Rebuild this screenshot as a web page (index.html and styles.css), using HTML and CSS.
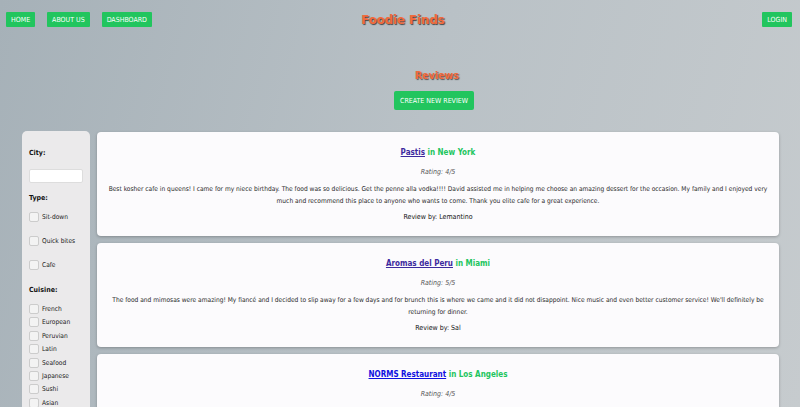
FILE: index.html
```html
<!DOCTYPE html>
<html>
<head>
<meta charset="utf-8">
<link rel="stylesheet" href="styles.css">
</head>
<body>
<header class="top">
  <nav class="nav">
    <a class="btn" href="#">HOME</a>
    <a class="btn" href="#">ABOUT US</a>
    <a class="btn" href="#">DASHBOARD</a>
  </nav>
  <h1 class="brand">Foodie Finds</h1>
  <div class="right"><a class="btn" href="#">LOGIN</a></div>
</header>
<section class="hero">
  <h2 class="page-title">Reviews</h2>
  <a class="btn btn-big" href="#">CREATE NEW REVIEW</a>
</section>
<main class="layout">
  <aside class="filters">
    <div class="label">City:</div>
    <input class="city" type="text">
    <div class="label">Type:</div>
    <div class="types">
      <label class="check"><span class="box"></span>Sit-down</label>
      <label class="check"><span class="box"></span>Quick bites</label>
      <label class="check"><span class="box"></span>Cafe</label>
    </div>
    <div class="label">Cuisine:</div>
    <div class="cuisines">
      <label class="check"><span class="box"></span>French</label>
      <label class="check"><span class="box"></span>European</label>
      <label class="check"><span class="box"></span>Peruvian</label>
      <label class="check"><span class="box"></span>Latin</label>
      <label class="check"><span class="box"></span>Seafood</label>
      <label class="check"><span class="box"></span>Japanese</label>
      <label class="check"><span class="box"></span>Sushi</label>
      <label class="check"><span class="box"></span>Asian</label>
    </div>
  </aside>
  <section class="reviews">
    <article class="card">
      <h3 class="card-title"><a class="visited" href="#">Pastis</a> <span class="city-name">in New York</span></h3>
      <p class="rating">Rating: 4/5</p>
      <p class="body">Best kosher cafe in queens! I came for my niece birthday. The food was so delicious. Get the penne alla vodka!!!! David assisted me in helping me choose an amazing dessert for the occasion. My family and I enjoyed very much and recommend this place to anyone who wants to come. Thank you elite cafe for a great experience.</p>
      <p class="by">Review by: Lemantino</p>
    </article>
    <article class="card">
      <h3 class="card-title"><a class="visited" href="#">Aromas del Peru</a> <span class="city-name">in Miami</span></h3>
      <p class="rating">Rating: 5/5</p>
      <p class="body">The food and mimosas were amazing! My fiancé and I decided to slip away for a few days and for brunch this is where we came and it did not disappoint. Nice music and even better customer service! We'll definitely be returning for dinner.</p>
      <p class="by">Review by: Sal</p>
    </article>
    <article class="card">
      <h3 class="card-title"><a class="link" href="#">NORMS Restaurant</a> <span class="city-name">in Los Angeles</span></h3>
      <p class="rating">Rating: 4/5</p>
    </article>
  </section>
</main>
</body>
</html>
```
FILE: styles.css
```css
html, body {
  margin: 0;
  padding: 0;
}
body {
  font-family: "DejaVu Sans Condensed", "DejaVu Sans", sans-serif;
  font-size: 6.6px;
  color: #2a2a2a;
  background: linear-gradient(105deg, #a6b1b8 0%, #b9c1c6 50%, #c6cbce 100%);
  height: 407px;
  overflow: hidden;
}
.top {
  display: grid;
  grid-template-columns: 1fr auto 1fr;
  align-items: center;
  padding: 12px 8px 0 6px;
  height: 15px;
}
.nav {
  display: flex;
  gap: 12px;
}
.right {
  display: flex;
  justify-content: flex-end;
}
.btn {
  display: inline-flex;
  align-items: center;
  justify-content: center;
  height: 15px;
  padding: 0 5px;
  background: #22c55e;
  color: #fff;
  text-decoration: none;
  font-size: 7px;
  border-radius: 1px;
  box-sizing: border-box;
}
.brand {
  margin: 0 0 0 8px;
  font-family: "DejaVu Sans Condensed", "DejaVu Sans", sans-serif;
  font-size: 13px;
  font-weight: bold;
  color: #f26a3c;
  text-shadow: 1px 1px 1px #444;
  line-height: 15px;
}
.hero {
  display: flex;
  flex-direction: column;
  align-items: center;
  padding: 41px 21px 0 89px;
}
.page-title {
  margin: 0 0 0 6px;
  font-family: "DejaVu Sans Condensed", "DejaVu Sans", sans-serif;
  font-size: 10.5px;
  font-weight: bold;
  color: #f26a3c;
  text-shadow: 1px 1px 1px #555;
  line-height: 14px;
}
.btn-big {
  margin-top: 9px;
  height: 19px;
  padding: 0 6px;
  border-radius: 2px;
}
.layout {
  display: flex;
  gap: 7px;
  padding: 21px 21px 0 22px;
  align-items: flex-start;
}
.filters {
  width: 68px;
  flex: none;
  box-sizing: border-box;
  background: #ebeaeb;
  border-radius: 5px;
  padding: 17px 7px 20px 7px;
  min-height: 300px;
}
.label {
  font-weight: bold;
  font-size: 7px;
  color: #111;
  line-height: 10px;
}
.city {
  display: block;
  width: 54px;
  height: 14px;
  box-sizing: border-box;
  border: 1px solid #ddd;
  border-radius: 2px;
  background: #fff;
  margin: 11px 0 10px;
  padding: 0;
}
.types {
  display: flex;
  flex-direction: column;
  gap: 14px;
  margin: 9px 0 15px;
}
.cuisines {
  display: flex;
  flex-direction: column;
  gap: 3.4px;
  margin-top: 9px;
}
.check {
  display: flex;
  align-items: center;
  gap: 3px;
  line-height: 10px;
  color: #222;
}
.box {
  width: 8px;
  height: 8px;
  border: 1px solid #ccc;
  border-radius: 2px;
  background: #f3f3f3;
  flex: none;
}
.reviews {
  flex: 1;
  display: flex;
  flex-direction: column;
  gap: 7px;
  padding-top: 1px;
}
.card {
  background: #fcfbfd;
  border-radius: 4px;
  box-shadow: 0 1px 3px rgba(0,0,0,0.25);
  padding: 15px 10px 0;
  height: 104px;
  box-sizing: border-box;
  text-align: center;
}
.card-title {
  margin: 0;
  font-family: "DejaVu Sans Condensed", "DejaVu Sans", sans-serif;
  font-size: 8px;
  font-weight: bold;
  line-height: 12px;
}
.visited {
  color: #3c2a9e;
}
.link {
  color: #1010e0;
}
.city-name {
  color: #22c55e;
}
.rating {
  margin: 8px 0 0;
  font-style: italic;
  font-size: 7px;
  color: #555;
  line-height: 10px;
}
.body {
  margin: 6px 0 0;
  line-height: 12px;
}
.by {
  margin: 5px 0 0;
  font-size: 7px;
  color: #111;
  line-height: 10px;
}
```
